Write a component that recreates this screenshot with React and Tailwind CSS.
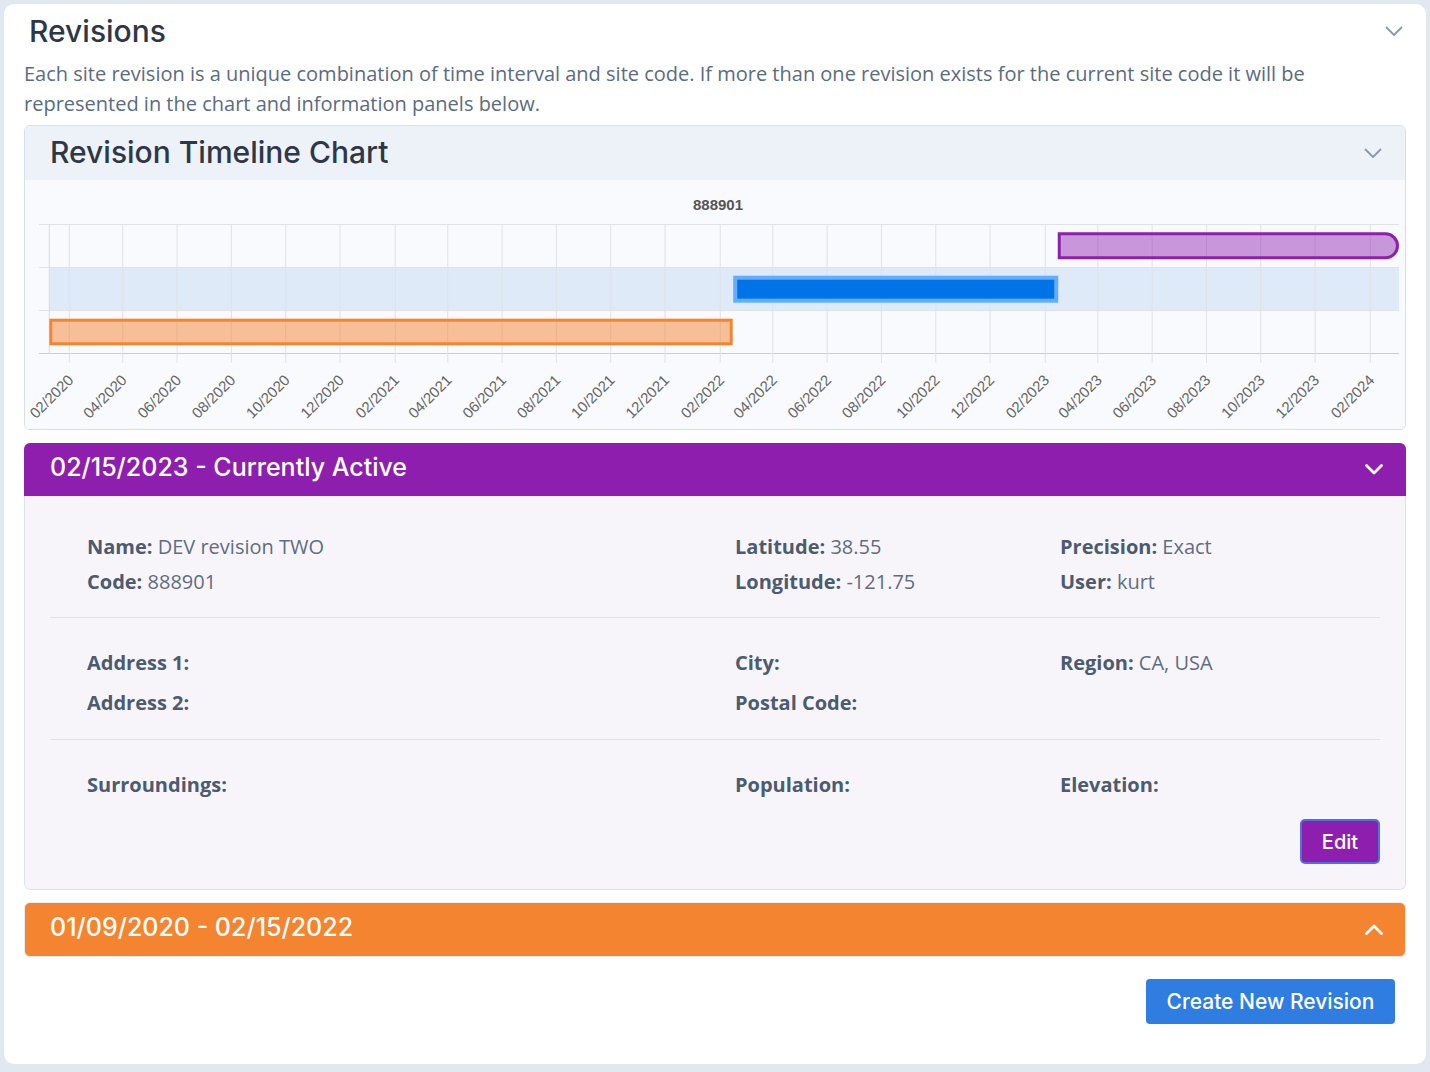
import React from "react";

const HEAD = { fontFamily: "Inter, 'Noto Sans', sans-serif" };
const BODY = { fontFamily: "'Open Sans', 'Noto Sans', sans-serif" };

const X0 = 69.3;
const PPD = 0.89049;
const BASE = Date.UTC(2020, 1, 1);
const xOf = (y, m, d) => X0 + ((Date.UTC(y, m - 1, d) - BASE) / 86400000) * PPD;

const ticks = [];
for (let i = 0; i <= 24; i++) {
  const total = 1 + i * 2;
  const y = 2020 + Math.floor(total / 12);
  const m = (total % 12) + 1;
  ticks.push({ x: xOf(y, m, 1), label: `${String(m).padStart(2, "0")}/${y}` });
}

function Chevron({ up = false, className = "", stroke = "currentColor", sw = 2 }) {
  return (
    <svg width="18" height="11" viewBox="0 0 18 11" className={className} fill="none">
      <polyline
        points={up ? "1.5,9.5 9,2 16.5,9.5" : "1.5,1.5 9,9 16.5,1.5"}
        stroke={stroke}
        strokeWidth={sw}
        strokeLinecap="round"
        strokeLinejoin="round"
      />
    </svg>
  );
}

function TimelineChart() {
  const left = 49.3;
  const right = 1399;
  const rows = [224.5, 267.5, 310.5, 353.5];
  const xOrangeEnd = xOf(2022, 2, 15);
  const xBlueEnd = xOf(2023, 2, 15);
  const pr = 12.5;
  const pTop = 232.3;
  const pH = 27;
  const pL = xBlueEnd + 1.5;
  const pR = right - 1.5;
  const pT = pTop + 1.5;
  const pB = pTop + pH - 1.5;
  const r = Math.min(pr, (pB - pT) / 2);
  const purplePath = `M${pL},${pT} L${pR - r},${pT} A${r},${r} 0 0 1 ${pR},${pT + r} L${pR},${pB - r} A${r},${r} 0 0 1 ${pR - r},${pB} L${pL},${pB} Z`;
  return (
    <svg width="1380" height="249" viewBox="25 180 1380 249" className="block">
      <text x="718" y="209.5" textAnchor="middle" fontSize="15" fontWeight="bold" fill="#555" fontFamily="'Liberation Sans', Arial, sans-serif">
        888901
      </text>
      <rect x={left} y={267.5} width={right - left} height={43} fill="#deeaf8" />
      {rows.map((y, i) => (
        <line key={"h" + i} x1={39} x2={right} y1={y} y2={y} stroke={i === 3 ? "#cbcdd1" : "#e0e2e6"} strokeWidth="1" />
      ))}
      <line x1={left} x2={left} y1={224} y2={354} stroke="#d9dbdf" strokeWidth="1" />
      {ticks.map((t) => (
        <line key={"v" + t.label} x1={t.x} x2={t.x} y1={224} y2={363} stroke="#e0e2e6" strokeWidth="1" />
      ))}
      {ticks.map((t) => (
        <text
          key={"t" + t.label}
          transform={`translate(${t.x + 5},${381}) rotate(-45)`}
          textAnchor="end"
          fontSize="15"
          fill="#666"
          fontFamily="'Liberation Sans', Arial, sans-serif"
        >
          {t.label}
        </text>
      ))}
      <rect x={left + 1.5} y={318.7 + 1.5} width={xOrangeEnd - left - 3} height={26.6 - 3} fill="rgba(245,132,49,0.5)" stroke="#f58431" strokeWidth="3" />
      <rect x={xOrangeEnd + 2.5} y={275.7 + 2} width={xBlueEnd - xOrangeEnd - 4} height={27 - 4} fill="#0074e6" stroke="#62aefa" strokeWidth="4" />
      <path d={purplePath} fill="rgba(142,31,174,0.45)" stroke="#8e1fae" strokeWidth="3" />
    </svg>
  );
}

function Field({ label, value }) {
  return (
    <div className="whitespace-nowrap">
      <span className="font-bold text-[#4b5b70]">{label}</span>
      {value ? <span className="text-[#5e6d82]"> {value}</span> : null}
    </div>
  );
}

export default function App() {
  return (
    <div className="min-h-screen bg-[#e2e8f0] p-[4px]" style={BODY}>
      <div className="bg-white rounded-[10px] px-[20px] pt-[8px] pb-[41px] h-[1060px]">
        <div className="flex items-center justify-between pl-[5px] pr-[3px] h-[38px]">
          <h2 className="text-[30px] leading-[38px] font-medium text-[#2d3748]" style={HEAD}>
            Revisions
          </h2>
          <Chevron stroke="#8c98aa" sw={1.8} />
        </div>
        <p className="mt-[9px] text-[20px] leading-[30px] text-[#5b6b80]">
          Each site revision is a unique combination of time interval and site code. If more than one revision exists for the current site code it will be represented in the chart and information panels below.
        </p>

        <div className="mt-[6px] border border-[#d6e0ed] rounded-[6px] overflow-hidden">
          <div className="h-[54px] bg-[#edf1f8] flex items-center justify-between pl-[25px] pr-[23px]">
            <h3 className="text-[30px] font-medium text-[#2d3748] leading-none -mt-[3px]" style={HEAD}>
              Revision Timeline Chart
            </h3>
            <Chevron stroke="#8c98aa" sw={1.8} />
          </div>
          <div className="bg-[#f8fafd]">
            <TimelineChart />
          </div>
        </div>

        <div className="mt-[13px] rounded-[6px] overflow-hidden">
          <div className="h-[53px] bg-[#8e1fae] flex items-center justify-between pl-[26px] pr-[23px]">
            <h4 className="text-[25px] font-medium text-white leading-none -mt-[4px]" style={HEAD}>
              02/15/2023 - Currently Active
            </h4>
            <Chevron stroke="#ffffff" sw={2.8} />
          </div>
          <div className="bg-[#f8f5fa] border-x border-b border-[#d9e2ef] rounded-b-[6px] px-[25px] text-[20px]">
            <div className="grid grid-cols-[648px_325px_1fr] pl-[37px] pt-[33px] pb-[18px] leading-[35px] border-b border-[#dde3ee]">
              <div>
                <Field label="Name:" value="DEV revision TWO" />
                <Field label="Code:" value="888901" />
              </div>
              <div>
                <Field label="Latitude:" value="38.55" />
                <Field label="Longitude:" value="-121.75" />
              </div>
              <div>
                <Field label="Precision:" value="Exact" />
                <Field label="User:" value="kurt" />
              </div>
            </div>
            <div className="grid grid-cols-[648px_325px_1fr] pl-[37px] pt-[25px] pb-[16px] leading-[40px] border-b border-[#dde3ee]">
              <div>
                <Field label="Address 1:" />
                <Field label="Address 2:" />
              </div>
              <div>
                <Field label="City:" />
                <Field label="Postal Code:" />
              </div>
              <div>
                <Field label="Region:" value="CA, USA" />
              </div>
            </div>
            <div className="pt-[27px] pb-[25px]">
              <div className="grid grid-cols-[648px_325px_1fr] pl-[37px] leading-[35px]">
                <Field label="Surroundings:" />
                <Field label="Population:" />
                <Field label="Elevation:" />
              </div>
              <div className="flex justify-end mt-[17px]">
                <button
                  className="h-[45px] w-[80px] rounded-[5px] bg-[#8e1fae] border-2 border-[#4a72e0] text-white text-[20px] font-medium"
                  style={HEAD}
                >
                  Edit
                </button>
              </div>
            </div>
          </div>
        </div>

        <div className="mt-[12px] h-[55px] rounded-[6px] bg-[#f58431] border border-[#e7ebf2] flex items-center justify-between pl-[25px] pr-[22px]">
          <h4 className="text-[25px] font-medium text-white leading-none -mt-[4px]" style={HEAD}>
            01/09/2020 - 02/15/2022
          </h4>
          <Chevron up stroke="#ffffff" sw={2.8} />
        </div>

        <div className="flex justify-end mt-[22px] pr-[11px]">
          <button
            className="h-[45px] w-[249px] rounded-[4px] bg-[#2f7de1] text-white text-[21px] font-medium"
            style={HEAD}
          >
            Create New Revision
          </button>
        </div>
      </div>
    </div>
  );
}
